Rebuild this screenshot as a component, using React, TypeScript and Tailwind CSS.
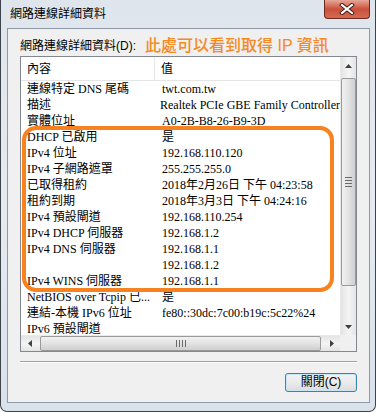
import React from "react";

const ui = { fontFamily: '"Liberation Sans","Noto Sans CJK TC",sans-serif' };
const listFont = { fontFamily: '"Liberation Serif","Noto Sans CJK TC",serif' };

const rows: [string, string][] = [
  ["連線特定 DNS 尾碼", "twt.com.tw"],
  ["描述", "Realtek PCIe GBE Family Controller"],
  ["實體位址", "A0-2B-B8-26-B9-3D"],
  ["DHCP 已啟用", "是"],
  ["IPv4 位址", "192.168.110.120"],
  ["IPv4 子網路遮罩", "255.255.255.0"],
  ["已取得租約", "2018年2月26日 下午 04:23:58"],
  ["租約到期", "2018年3月3日 下午 04:24:16"],
  ["IPv4 預設閘道", "192.168.110.254"],
  ["IPv4 DHCP 伺服器", "192.168.1.2"],
  ["IPv4 DNS 伺服器", "192.168.1.1"],
  ["", "192.168.1.2"],
  ["IPv4 WINS 伺服器", "192.168.1.1"],
  ["NetBIOS over Tcpip 已...", "是"],
  ["連結-本機 IPv6 位址", "fe80::30dc:7c00:b19c:5c22%24"],
  ["IPv6 預設閘道", ""],
];

function Tri({ dir }: { dir: "up" | "down" | "left" | "right" }) {
  const pts = {
    up: "0,4 3.5,0 7,4",
    down: "0,0 3.5,4 7,0",
    left: "4,0 0,3.5 4,7",
    right: "0,0 4,3.5 0,7",
  }[dir];
  const horiz = dir === "left" || dir === "right";
  return (
    <svg width={horiz ? 4 : 7} height={horiz ? 7 : 4} viewBox={horiz ? "0 0 4 7" : "0 0 7 4"}>
      <polygon points={pts} fill="#404040" />
    </svg>
  );
}

export default function App() {
  return (
    <div
      className="relative w-[376px] h-[412px] overflow-hidden flex flex-col border-x border-b border-[#3e4349] rounded-b-[7px] bg-gradient-to-b from-[#dfe5ec] via-[#e6ebf1] to-[#d9e1ea]"
      style={ui}
    >
      {/* title bar */}
      <div className="h-[28px] flex items-start shrink-0">
        <div className="pl-[9px] pt-[7px] text-[12px] leading-[14px] text-black">網路連線詳細資料</div>
        <div className="ml-auto mr-[5px] w-[46px] h-[19px] rounded-b-[4px] border border-t-0 border-[#6e2a20] bg-gradient-to-b from-[#e7a698] via-[#c9503b] to-[#d46a52] flex items-center justify-center">
          <svg width="16" height="12" viewBox="0 0 16 12">
            <path d="M3 2 L13 10 M13 2 L3 10" stroke="#3b1510" strokeWidth="4" strokeLinecap="square" />
            <path d="M3 2 L13 10 M13 2 L3 10" stroke="#ffffff" strokeWidth="2.2" strokeLinecap="square" />
          </svg>
        </div>
      </div>

      {/* client area */}
      <div className="ml-[6px] mr-[5px] h-[375px] border border-[#8d99a7] bg-[#f0f0f0] flex flex-col px-[12px] pt-[7px]">
        <div className="h-[20px] flex items-center">
          <span className="text-[12px] text-black">網路連線詳細資料(D):</span>
          <span className="ml-[9px] text-[16px] font-medium text-[#f58a24]">此處可以看到取得 IP 資訊</span>
        </div>

        {/* list box */}
        <div className="relative h-[296px] border border-[#828790] bg-white grid grid-cols-[1fr_16px] grid-rows-[1fr_16px]" style={listFont}>
          <div className="overflow-hidden flex flex-col">
            <div className="h-[24px] shrink-0 flex border-b border-[#e5e5e5] text-[12px] text-black" style={ui}>
              <div className="w-[134px] pl-[6px] flex items-center border-r border-[#e5e5e5]">內容</div>
              <div className="pl-[6px] flex items-center">值</div>
            </div>
            {rows.map(([k, v], i) => (
              <div key={i} className="h-[16px] shrink-0 flex text-[12px] leading-[16px] text-black whitespace-nowrap">
                <div className="w-[134px] pl-[6px] overflow-hidden">{k}</div>
                <div className="pl-[7px]">{v}</div>
              </div>
            ))}
          </div>

          {/* vertical scrollbar */}
          <div className="bg-gradient-to-r from-[#e4e4e4] via-[#f4f4f4] to-[#e4e4e4] flex flex-col items-center border-l border-[#e9e9e9]">
            <div className="h-[17px] w-full flex items-center justify-center"><Tri dir="up" /></div>
            <div className="mt-[4px] h-[208px] w-[15px] rounded-[2px] border border-[#9a9a9a] bg-gradient-to-r from-[#f1f1f1] via-[#e2e2e2] to-[#cfcfcf] flex flex-col items-center justify-center gap-[2px]">
              <div className="w-[7px] h-[1px] bg-[#6a6a6a]" />
              <div className="w-[7px] h-[1px] bg-[#6a6a6a]" />
              <div className="w-[7px] h-[1px] bg-[#6a6a6a]" />
              <div className="w-[7px] h-[1px] bg-[#6a6a6a]" />
            </div>
            <div className="flex-1" />
            <div className="h-[17px] w-full flex items-center justify-center"><Tri dir="down" /></div>
          </div>

          {/* horizontal scrollbar */}
          <div className="bg-gradient-to-b from-[#e4e4e4] via-[#f4f4f4] to-[#e4e4e4] flex items-center border-t border-[#e9e9e9]">
            <div className="w-[17px] h-full flex items-center justify-center"><Tri dir="left" /></div>
            <div className="ml-[2px] h-[15px] w-[281px] rounded-[2px] border border-[#9a9a9a] bg-gradient-to-b from-[#f1f1f1] via-[#e2e2e2] to-[#cfcfcf] flex items-center justify-center gap-[2px]">
              <div className="w-[1px] h-[7px] bg-[#6a6a6a]" />
              <div className="w-[1px] h-[7px] bg-[#6a6a6a]" />
              <div className="w-[1px] h-[7px] bg-[#6a6a6a]" />
              <div className="w-[1px] h-[7px] bg-[#6a6a6a]" />
            </div>
            <div className="flex-1" />
            <div className="w-[17px] h-full flex items-center justify-center"><Tri dir="right" /></div>
          </div>
          <div className="bg-[#f0f0f0]" />

          {/* orange annotation */}
          <div className="absolute left-[1px] top-[69px] w-[312px] h-[166px] border-[4px] border-[#f7821f] rounded-[14px] pointer-events-none" />
        </div>

        {/* separator */}
        <div className="mt-[9px] h-[2px] border-t border-[#a0a0a0] border-b border-b-white" />

        <div className="mt-[10px] flex justify-end">
          <button className="w-[72px] h-[19px] rounded-[3px] border border-[#3c7fb1] bg-gradient-to-b from-[#f2f2f2] via-[#ebebeb] to-[#dcdcdc] text-[12px] leading-[15px] text-black shadow-[inset_0_0_0_1px_#c8e6f8]">
            關閉(C)
          </button>
        </div>
      </div>
    </div>
  );
}
